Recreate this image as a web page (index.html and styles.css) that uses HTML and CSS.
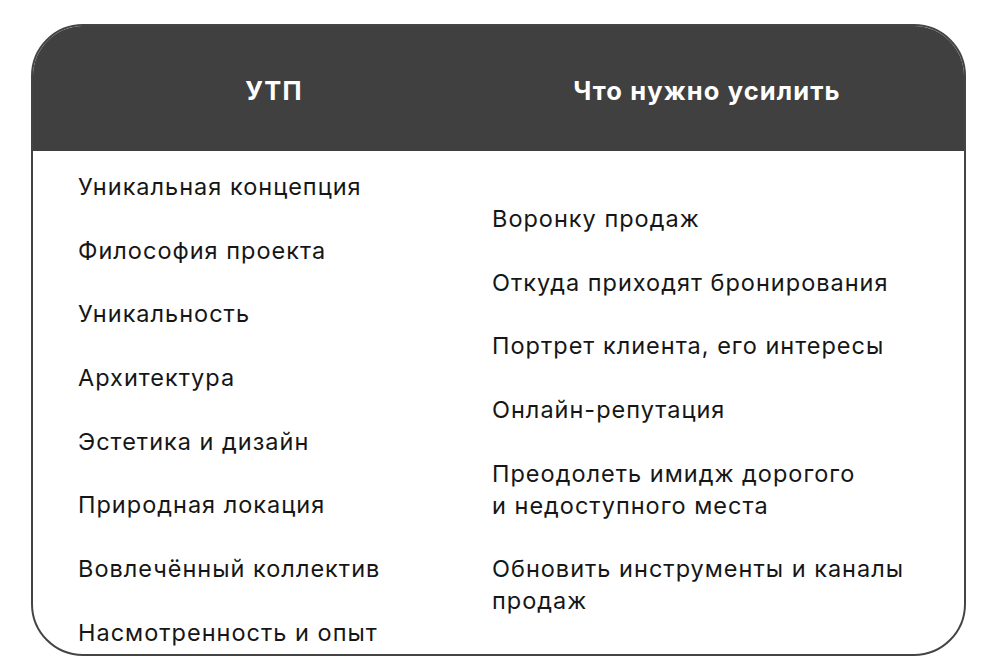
FILE: index.html
```html
<!DOCTYPE html>
<html lang="ru">
<head>
<meta charset="utf-8">
<link rel="stylesheet" href="styles.css">
</head>
<body>
<div class="card">
  <div class="head">
    <div class="hcell hleft">УТП</div>
    <div class="hcell hright">Что нужно усилить</div>
  </div>
  <div class="body">
    <ul class="col left">
      <li>Уникальная концепция</li>
      <li>Философия проекта</li>
      <li>Уникальность</li>
      <li>Архитектура</li>
      <li>Эстетика и дизайн</li>
      <li>Природная локация</li>
      <li>Вовлечённый коллектив</li>
      <li>Насмотренность и опыт</li>
    </ul>
    <ul class="col right">
      <li>Воронку продаж</li>
      <li>Откуда приходят бронирования</li>
      <li>Портрет клиента, его интересы</li>
      <li>Онлайн-репутация</li>
      <li>Преодолеть имидж дорогого<br>и недоступного места</li>
      <li>Обновить инструменты и каналы<br>продаж</li>
    </ul>
  </div>
</div>
</body>
</html>
```

FILE: styles.css
```css
html, body {
  margin: 0;
  padding: 0;
  background: #ffffff;
}
body {
  font-family: Inter, "Noto Sans", Roboto, sans-serif;
  color: #161616;
}
.card {
  box-sizing: border-box;
  margin: 24px 0 0 31px;
  width: 935px;
  height: 632px;
  border: 2px solid #444444;
  border-radius: 52px;
  overflow: hidden;
  display: flex;
  flex-direction: column;
}
.head {
  height: 127px;
  background: #404040;
  display: grid;
  grid-template-columns: 459px 1fr;
  align-items: center;
  padding-top: 6px;
  box-sizing: border-box;
  margin: -2px -2px 0 -2px;
}
.hcell {
  color: #ffffff;
  font-weight: 700;
  font-size: 25.5px;
  letter-spacing: 1.1px;
  text-align: center;
}
.hleft { padding-left: 27px; }
.hright { padding-right: 42px; }
.body {
  display: grid;
  grid-template-columns: 459px 1fr;
  flex: 1;
}
.col {
  list-style: none;
  margin: 0;
  padding: 0;
  display: flex;
  flex-direction: column;
  gap: 31.7px;
  font-size: 23.5px;
  letter-spacing: 1px;
  line-height: 32px;
}
.left { padding: 20px 0 0 45px; }
.right { padding: 52px 0 0 0; }
```
